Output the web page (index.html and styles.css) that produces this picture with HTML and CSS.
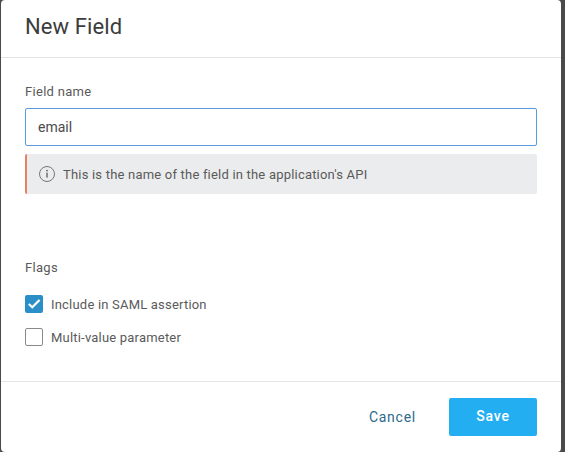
FILE: index.html
```html
<!DOCTYPE html>
<html lang="en">
<head>
    <meta charset="UTF-8">
    <title>New Field</title>
    <link rel="stylesheet" href="styles.css">
</head>
<body>
    <div class="modal">
        <div class="modal-header">
            <h1>New Field</h1>
        </div>
        <div class="modal-body">
            <div class="form-group">
                <label class="field-label" for="fieldName">Field name</label>
                <input type="text" id="fieldName" value="email">
                <div class="help-box">
                    <svg class="info-icon" width="18" height="18" viewBox="0 0 18 18">
                        <circle cx="9" cy="9" r="7.5" fill="none" stroke="#777" stroke-width="1"/>
                        <circle cx="9" cy="5.6" r="0.9" fill="#666"/>
                        <rect x="8.3" y="7.6" width="1.4" height="5" fill="#666"/>
                    </svg>
                    <span>This is the name of the field in the application's API</span>
                </div>
            </div>
            <div class="flags">
                <div class="field-label">Flags</div>
                <div class="check-row">
                    <span class="checkbox checked">
                        <svg width="18" height="18" viewBox="0 0 18 18">
                            <path d="M3.8 9l3.5 3.3 7.2-7.3" fill="none" stroke="#fff" stroke-width="2.2"/>
                        </svg>
                    </span>
                    <span>Include in SAML assertion</span>
                </div>
                <div class="check-row">
                    <span class="checkbox"></span>
                    <span>Multi-value parameter</span>
                </div>
            </div>
        </div>
        <div class="modal-footer">
            <button class="btn-cancel">Cancel</button>
            <button class="btn-save">Save</button>
        </div>
    </div>
</body>
</html>
```

FILE: styles.css
```css
* {
    margin: 0;
    padding: 0;
    box-sizing: border-box;
    font-family: Roboto, "Liberation Sans", sans-serif;
}

body {
    width: 565px;
    height: 452px;
    overflow: hidden;
    background-color: #4a4a4a;
    padding-left: 1px;
    padding-right: 4px;
}

.modal {
    height: 452px;
    background-color: white;
    border-radius: 4px;
    display: flex;
    flex-direction: column;
}

.modal-header {
    height: 58px;
    padding: 15px 24px 0;
    border-bottom: 1px solid #e3e3e3;
}

h1 {
    font-size: 22px;
    font-weight: 400;
    line-height: 24px;
    color: #3c3c3c;
    letter-spacing: 0.1px;
}

.modal-body {
    flex: 1;
    padding: 26px 24px 0;
}

.field-label {
    display: block;
    font-size: 13px;
    line-height: 16px;
    color: #5a5a5a;
    letter-spacing: 0.3px;
}

input {
    display: block;
    width: 100%;
    height: 38px;
    margin-top: 8px;
    padding: 0 12px;
    border: 1px solid #5b9bd9;
    border-radius: 2px;
    font-size: 14px;
    color: #4a4a4a;
    outline: none;
}

.help-box {
    display: flex;
    align-items: center;
    gap: 7px;
    height: 40px;
    margin-top: 8px;
    padding-left: 11px;
    background-color: #ebeced;
    border-left: 2px solid #e5825f;
    border-radius: 2px;
    font-size: 13px;
    color: #5a5a5a;
    letter-spacing: 0.2px;
}

.flags {
    margin-top: 66px;
}

.check-row {
    display: flex;
    align-items: center;
    gap: 8px;
    height: 18px;
    font-size: 13px;
    color: #5a5a5a;
    letter-spacing: 0.2px;
    margin-top: 15px;
}

.flags .field-label + .check-row {
    margin-top: 19px;
}

.checkbox {
    width: 18px;
    height: 18px;
    border: 1px solid #8a8a8a;
    border-radius: 2px;
    background-color: white;
}

.checkbox.checked {
    border: none;
    background-color: #2a8fc9;
}

.checkbox svg {
    display: block;
}

.modal-footer {
    height: 71px;
    padding: 16px 24px 0;
    border-top: 1px solid #e3e6e8;
    display: flex;
    justify-content: flex-end;
    align-items: flex-start;
}

button {
    border: none;
    border-radius: 2px;
    cursor: pointer;
    font-size: 14px;
}

.btn-cancel {
    height: 38px;
    margin-right: 33px;
    background: none;
    color: #2c6a8c;
    letter-spacing: 0.75px;
}

.btn-save {
    width: 88px;
    height: 38px;
    padding-bottom: 2px;
    background-color: #24aef2;
    color: white;
    font-weight: 500;
    letter-spacing: 0.8px;
}
```
